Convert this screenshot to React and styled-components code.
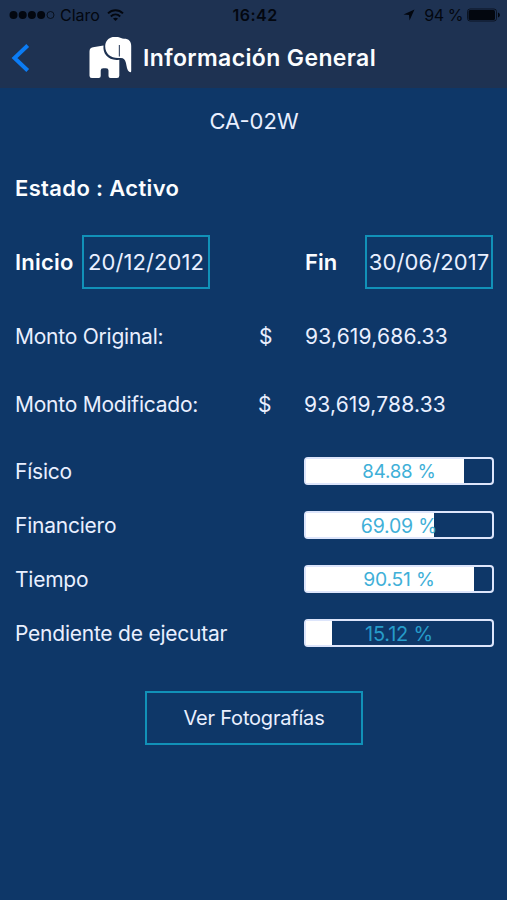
import React from 'react';
import styled, { createGlobalStyle } from 'styled-components';

const GlobalStyle = createGlobalStyle`
  * {
    box-sizing: border-box;
  }
  body {
    margin: 0;
    background-color: #0e3768;
    font-family: 'Inter', 'Liberation Sans', sans-serif;
    color: #e9efff;
  }
`;

const Screen = styled.div`
  width: 507px;
  height: 900px;
  overflow: hidden;
  background-color: #0e3768;
`;

// Header
const Header = styled.header`
  height: 88px;
  background-color: #1e3252;
`;

const StatusBar = styled.div`
  display: grid;
  grid-template-columns: 1fr auto 1fr;
  align-items: center;
  height: 30px;
  padding: 0 6px 0 9px;
  color: #03070f;
  font-size: 16px;
`;

const StatusGroup = styled.div`
  display: flex;
  align-items: center;
  justify-content: ${(props) => (props.$end ? 'flex-end' : 'flex-start')};
`;

const Signal = styled.svg`
  margin-right: 5px;
`;

const Carrier = styled.span`
  margin-right: 7px;
`;

const Clock = styled.span`
  font-weight: 600;
  letter-spacing: 0.5px;
`;

const BatteryLevel = styled.span`
  margin: 0 4px 0 9px;
  letter-spacing: -0.4px;
`;

const NavBar = styled.div`
  display: flex;
  align-items: center;
  height: 58px;
  padding-left: 11px;
`;

const BackButton = styled.button`
  display: flex;
  width: 20px;
  margin-right: 57px;
  padding: 0;
  border: 0;
  background: none;
`;

const Title = styled.h1`
  margin: 0 0 0 10px;
  padding-bottom: 3px;
  color: #fbfdff;
  font-size: 23px;
  font-weight: 600;
  letter-spacing: 0.37px;
  white-space: nowrap;
`;

// Body
const Content = styled.main`
  padding: 0 14px 0 15px;
`;

const Code = styled.div`
  display: flex;
  align-items: center;
  justify-content: center;
  height: 66px;
  font-size: 22px;
`;

const Strong = styled.span`
  color: #fbfdff;
  font-size: 22px;
  font-weight: 600;
  letter-spacing: ${(props) => props.$spacing || 0}px;
  white-space: nowrap;
`;

const StatusRow = styled.div`
  display: flex;
  align-items: center;
  height: 68px;
`;

const DateRow = styled.div`
  display: grid;
  grid-template-columns: 67px 128px 95px 60px 128px;
  align-items: center;
  height: 80px;
  margin-bottom: 1px;
`;

const DateBox = styled.div`
  display: flex;
  align-items: center;
  justify-content: center;
  height: 54px;
  border: 2px solid #1191b8;
  font-size: 22px;
  letter-spacing: 0.1px;
  white-space: nowrap;
`;

const AmountRow = styled.div`
  display: grid;
  grid-template-columns: ${(props) => props.$columns};
  align-items: center;
  height: ${(props) => props.$height}px;
  font-size: 21px;
`;

const Amount = styled.span`
  letter-spacing: 0.2px;
`;

const ProgressList = styled.div`
  padding-top: 6px;
`;

const ProgressRow = styled.div`
  display: grid;
  grid-template-columns: 289px 190px;
  align-items: center;
  height: 54px;
`;

const Label = styled.span`
  font-size: 21px;
  letter-spacing: -0.23px;
  white-space: nowrap;
`;

const Track = styled.div`
  position: relative;
  height: 28px;
  border: 2px solid #dde5fb;
  border-radius: 4px;
`;

const Fill = styled.div`
  height: 100%;
  background-color: #fff;
`;

const Percent = styled.span`
  position: absolute;
  inset: 0;
  display: flex;
  align-items: center;
  justify-content: center;
  padding-top: ${(props) => props.$offset || 0}px;
  color: ${(props) => (props.$dark ? '#269cc9' : '#3fb0d8')};
  font-size: ${(props) => props.$size}px;
  letter-spacing: -0.2px;
`;

const PhotosButton = styled.button`
  display: block;
  width: 218px;
  height: 54px;
  margin: 31px auto 0 130px;
  padding: 0;
  border: 2px solid #1191b8;
  background: none;
  color: #e9efff;
  font-family: inherit;
  font-size: 20px;
  letter-spacing: -0.2px;
`;

const amounts = [
  { label: 'Monto Original:', value: '93,619,686.33', height: 67, columns: '244px 46px 1fr' },
  { label: 'Monto Modificado:', value: '93,619,788.33', height: 68, columns: '243px 46px 1fr' },
];

const progress = [
  { label: 'Físico', value: 84.88, size: 18.7 },
  { label: 'Financiero', value: 69.09, size: 19.5, offset: 1 },
  { label: 'Tiempo', value: 90.51, size: 19.3 },
  { label: 'Pendiente de ejecutar', value: 15.12, size: 20, offset: 2 },
];

const SignalDots = () => (
  <Signal width="46" height="10" viewBox="0 0 46 10">
    {[4.5, 13.7, 22.9, 32.1].map((cx) => (
      <circle key={cx} cx={cx} cy="5" r="4" fill="currentColor" />
    ))}
    <circle cx="41.5" cy="5" r="3.5" fill="none" stroke="currentColor" strokeWidth="0.8" />
  </Signal>
);

const WifiIcon = () => (
  <svg width="17" height="13" viewBox="0 0 17 13" fill="none" stroke="currentColor">
    <path d="M1 4.4C5.3 0.3 11.7 0.3 16 4.4" strokeWidth="2" />
    <path d="M3.8 7.4C6.6 4.9 10.4 4.9 13.2 7.4" strokeWidth="2" />
    <path d="M8.5 12L6 9.6C7.3 8.4 9.7 8.4 11 9.6Z" fill="currentColor" stroke="none" />
  </svg>
);

const LocationIcon = () => (
  <svg width="12" height="12" viewBox="0 0 12 12">
    <path d="M11.5 0.5L6.5 11.5L6 6L0.5 5.5Z" fill="currentColor" />
  </svg>
);

const BatteryIcon = () => (
  <svg width="34" height="14" viewBox="0 0 34 14">
    <rect x="0.5" y="1" width="29" height="12" rx="2.5" fill="none" stroke="currentColor" strokeWidth="0.7" />
    <rect x="1.5" y="2" width="26.5" height="10" rx="1.5" fill="currentColor" />
    <path d="M31 4.5C33.5 5.5 33.5 8.5 31 9.5Z" fill="currentColor" />
  </svg>
);

const BackIcon = () => (
  <svg width="20" height="30" viewBox="0 0 20 30">
    <path d="M16.7 1.5L3.5 14L16.7 26.5" fill="none" stroke="#0b7cf5" strokeWidth="4" />
  </svg>
);

const ElephantLogo = () => (
  <svg width="45" height="44" viewBox="0 0 45 44">
    <path
      d="M1.5 14.5Q1.5 10.8 5 10.3L15.5 8.6C14.5 17 20.5 24.3 31.3 22.8V38.7Q31.3 41 29 41H22.5Q20.5 41 20.5 39V33.5Q20.5 31.2 18 31.2H15.2Q12.7 31.2 12.7 33.5V39Q12.7 41 10.7 41H3.8Q1.5 41 1.5 38.7Z"
      fill="#fff"
    />
    <path
      d="M17.2 9.5C17.2 3.5 21.5 -0.3 27.5 -0.3C31.5 -0.3 33 1.8 36 1.8C41 1.8 43.2 4.5 43.2 9V34Q43.2 36 41.2 34.8C39 33.3 38.7 29 37.8 25.5C37 22.3 35.5 20.7 32.5 20.9C24 22 17.2 17.5 17.2 9.5Z"
      fill="#fff"
    />
    <path d="M31.4 8V19.5" stroke="#44546f" strokeWidth="1.2" />
  </svg>
);

const ProgressBar = ({ value, size, offset }) => (
  <Track>
    {/* the fill is measured from the outer edge of the border */}
    <Fill style={{ width: `${value * 1.88 - 2}px` }} />
    <Percent $dark={value < 50} $size={size} $offset={offset}>
      {value.toFixed(2)} %
    </Percent>
  </Track>
);

const App = () => {
  return (
    <>
      <GlobalStyle />
      <Screen>
        <Header>
          <StatusBar>
            <StatusGroup>
              <SignalDots />
              <Carrier>Claro</Carrier>
              <WifiIcon />
            </StatusGroup>
            <Clock>16:42</Clock>
            <StatusGroup $end>
              <LocationIcon />
              <BatteryLevel>94 %</BatteryLevel>
              <BatteryIcon />
            </StatusGroup>
          </StatusBar>
          <NavBar>
            <BackButton aria-label="Regresar">
              <BackIcon />
            </BackButton>
            <ElephantLogo />
            <Title>Información General</Title>
          </NavBar>
        </Header>
        <Content>
          <Code>CA-02W</Code>
          <StatusRow>
            <Strong $spacing={0.35}>Estado : Activo</Strong>
          </StatusRow>
          <DateRow>
            <Strong $spacing={0.2}>Inicio</Strong>
            <DateBox>20/12/2012</DateBox>
            <span />
            <Strong>Fin</Strong>
            <DateBox>30/06/2017</DateBox>
          </DateRow>
          {amounts.map((item) => (
            <AmountRow key={item.label} $height={item.height} $columns={item.columns}>
              <Label>{item.label}</Label>
              <span>$</span>
              <Amount>{item.value}</Amount>
            </AmountRow>
          ))}
          <ProgressList>
            {progress.map((item) => (
              <ProgressRow key={item.label}>
                <Label>{item.label}</Label>
                <ProgressBar value={item.value} size={item.size} offset={item.offset} />
              </ProgressRow>
            ))}
          </ProgressList>
          <PhotosButton>Ver Fotografías</PhotosButton>
        </Content>
      </Screen>
    </>
  );
};

export default App;
